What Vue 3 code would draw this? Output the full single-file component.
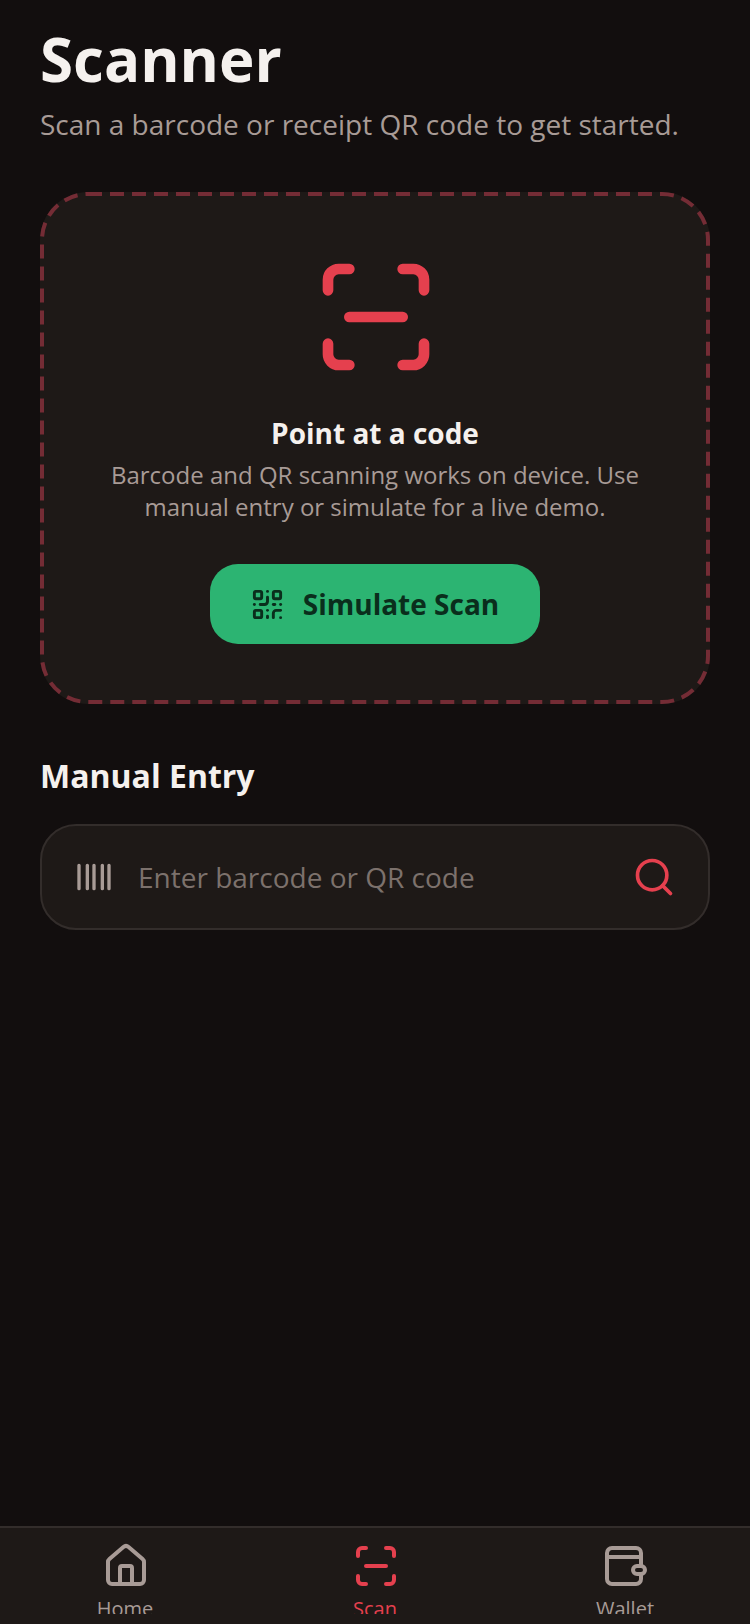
<template>
  <div class="screen">
    <main class="content">
      <header class="head">
        <h1 class="title">Scanner</h1>
        <p class="sub">Scan a barcode or receipt QR code to get started.</p>
      </header>

      <section class="scan-card">
        <!-- dashes are longer than a css dashed border gives -->
        <svg class="card-dash" width="670" height="512">
          <rect x="2" y="2" width="666" height="508" rx="46" />
        </svg>
        <svg class="scan-icon" viewBox="0 0 24 24">
          <path d="M3 7V5a2 2 0 0 1 2-2h2" />
          <path d="M17 3h2a2 2 0 0 1 2 2v2" />
          <path d="M21 17v2a2 2 0 0 1-2 2h-2" />
          <path d="M7 21H5a2 2 0 0 1-2-2v-2" />
          <path d="M7 12h10" />
        </svg>
        <h2 class="card-title">Point at a code</h2>
        <p class="card-text">Barcode and QR scanning works on device. Use manual entry or simulate for a live demo.</p>
        <button class="sim-btn">
          <svg class="qr-icon" viewBox="0 0 24 24">
            <rect x="3" y="3" width="5" height="5" rx="1" />
            <rect x="16" y="3" width="5" height="5" rx="1" />
            <rect x="3" y="16" width="5" height="5" rx="1" />
            <path d="M21 16h-3a2 2 0 0 0-2 2v3" />
            <path d="M21 21v.01" />
            <path d="M12 7v3a2 2 0 0 1-2 2H7" />
            <path d="M3 12h.01" />
            <path d="M12 3h.01" />
            <path d="M12 16v.01" />
            <path d="M16 12h1" />
            <path d="M21 12v.01" />
            <path d="M12 21v-1" />
          </svg>
          <span>Simulate Scan</span>
        </button>
      </section>

      <h2 class="manual-title">Manual Entry</h2>
      <div class="manual-box">
        <svg class="barcode-icon" viewBox="0 0 24 24">
          <path d="M3 5v14M8 5v14M12 5v14M17 5v14M21 5v14" />
        </svg>
        <span class="placeholder">Enter barcode or QR code</span>
        <svg class="search-icon" viewBox="0 0 24 24">
          <circle cx="11" cy="11" r="8" />
          <path d="m21 21-4.3-4.3" />
        </svg>
      </div>
    </main>

    <nav class="tabs">
      <div v-for="tab in tabs" :key="tab.label" class="tab" :class="{ active: tab.active }">
        <svg class="tab-icon" viewBox="0 0 24 24">
          <path v-for="d in tab.paths" :key="d" :d="d" />
        </svg>
        <span class="tab-label">{{ tab.label }}</span>
      </div>
    </nav>
  </div>
</template>

<script setup>
const tabs = [
  {
    label: 'Home',
    paths: [
      'M3 10a2 2 0 0 1 .709-1.528l7-5.999a2 2 0 0 1 2.582 0l7 5.999A2 2 0 0 1 21 10v9a2 2 0 0 1-2 2H5a2 2 0 0 1-2-2z',
      'M15 21v-8a1 1 0 0 0-1-1h-4a1 1 0 0 0-1 1v8'
    ]
  },
  {
    label: 'Scan',
    active: true,
    paths: [
      'M3 7V5a2 2 0 0 1 2-2h2',
      'M17 3h2a2 2 0 0 1 2 2v2',
      'M21 17v2a2 2 0 0 1-2 2h-2',
      'M7 21H5a2 2 0 0 1-2-2v-2',
      'M7 12h10'
    ]
  },
  {
    label: 'Wallet',
    paths: [
      'M19.5 12V5.5A2.5 2.5 0 0 0 17 3H5a2.5 2.5 0 0 0-2.5 2.5v13A2.5 2.5 0 0 0 5 21h12a2.5 2.5 0 0 0 2.5-2.5V16',
      'M2.5 7.5h17',
      'M17.5 12h2a2 2 0 0 1 0 4h-2a2 2 0 0 1 0-4z'
    ]
  }
]
</script>

<style>
html,
body {
  margin: 0;
  background: #120e0e;
}
</style>

<style scoped>
.screen {
  width: 750px;
  height: 1624px;
  display: flex;
  flex-direction: column;
  background: #120e0e;
  font-family: "Open Sans", "Noto Sans", sans-serif;
  overflow: hidden;
}

.content {
  flex: 1;
  padding: 19px 40px 0;
}

.title {
  margin: 0;
  font-size: 60px;
  line-height: 80px;
  font-weight: 700;
  color: #f5f1ee;
}

.sub {
  margin: 5px 0 0;
  font-size: 28px;
  line-height: 40px;
  color: #a89b96;
}

.scan-card {
  position: relative;
  margin-top: 48px;
  height: 512px;
  box-sizing: border-box;
  display: flex;
  flex-direction: column;
  align-items: center;
  padding: 61px 40px 0;
  background: #1e1917;
  border-radius: 48px;
}

.card-dash {
  position: absolute;
  top: 0;
  left: 0;
  fill: none;
  stroke: #742c35;
  stroke-width: 4;
  stroke-dasharray: 14 8;
}

.scan-icon {
  width: 128px;
  height: 128px;
  margin-left: 2px;
  fill: none;
  stroke: #e5404e;
  stroke-width: 2;
  stroke-linecap: round;
  stroke-linejoin: round;
}

.card-title {
  margin: 32px 0 0;
  font-size: 28px;
  line-height: 40px;
  font-weight: 700;
  color: #f5f1ee;
}

.card-text {
  margin: 6px 0 0;
  font-size: 24px;
  line-height: 32px;
  text-align: center;
  color: #a89b96;
}

.sim-btn {
  margin-top: 41px;
  width: 330px;
  height: 80px;
  flex: none;
  display: flex;
  align-items: center;
  justify-content: center;
  gap: 18px;
  padding: 0 0 0 2px;
  border: none;
  border-radius: 28px;
  background: #2cb472;
  color: #0a2e1c;
  font-family: inherit;
  font-size: 28px;
  font-weight: 700;
}

.qr-icon {
  width: 35px;
  height: 35px;
  margin-left: -3px;
  fill: none;
  stroke: #0a2e1c;
  stroke-width: 2;
  stroke-linecap: round;
  stroke-linejoin: round;
}

.manual-title {
  margin: 50px 0 0;
  font-size: 32px;
  line-height: 44px;
  font-weight: 700;
  color: #f5f1ee;
}

.manual-box {
  margin-top: 26px;
  height: 106px;
  box-sizing: border-box;
  display: flex;
  align-items: center;
  padding: 0 32px;
  background: #1e1917;
  border: 2px solid #332d2b;
  border-radius: 36px;
}

.barcode-icon {
  width: 40px;
  height: 40px;
  fill: none;
  stroke: #a89b96;
  stroke-width: 2;
  stroke-linecap: round;
}

.placeholder {
  flex: 1;
  margin-left: 24px;
  font-size: 28px;
  color: #7c716c;
}

.search-icon {
  width: 44px;
  height: 44px;
  fill: none;
  stroke: #e5404e;
  stroke-width: 2;
  stroke-linecap: round;
  stroke-linejoin: round;
}

.tabs {
  height: 98px;
  box-sizing: border-box;
  display: flex;
  background: #1e1917;
  border-top: 2px solid #332d2b;
}

.tab {
  flex: 1;
  height: 86px;
  display: flex;
  flex-direction: column;
  align-items: center;
  overflow: hidden;
  padding-top: 14px;
  box-sizing: border-box;
  color: #a89b96;
}

.tab.active {
  color: #e5404e;
}

.tab-icon {
  flex: none;
  width: 48px;
  height: 48px;
  margin-left: 2px;
  fill: none;
  stroke: currentColor;
  stroke-width: 2;
  stroke-linecap: round;
  stroke-linejoin: round;
}

.tab-label {
  margin-top: 4px;
  font-size: 20px;
  line-height: 30px;
}
</style>
